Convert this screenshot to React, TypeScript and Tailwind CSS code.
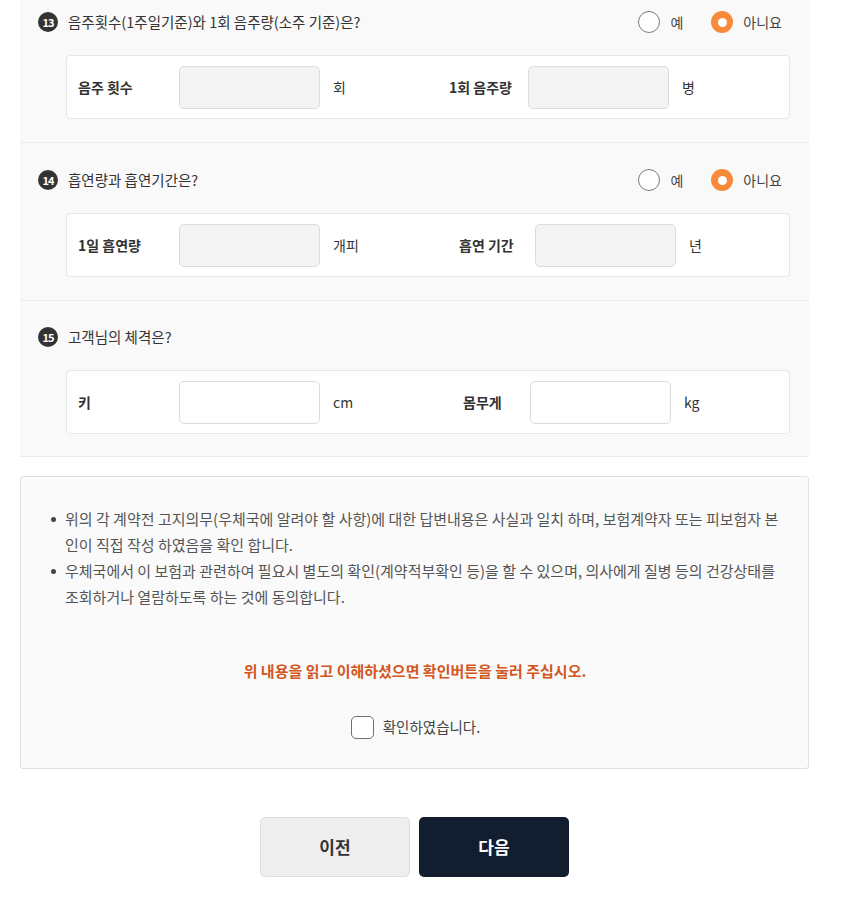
import { useState } from "react";

interface Field {
  label: string;
  unit: string;
  labelW: string;
  unitW: string;
  filled: boolean;
}

interface Question {
  no: number;
  title: string;
  radio: boolean;
  wrap: string;
  left: Field;
  right: Field;
}

const questions: Question[] = [
  {
    no: 13,
    title: "음주횟수(1주일기준)와 1회 음주량(소주 기준)은?",
    radio: true,
    wrap: "pt-[11px] pb-[23px]",
    left: { label: "음주 횟수", unit: "회", labelW: "w-[101px]", unitW: "w-[116px]", filled: true },
    right: { label: "1회 음주량", unit: "병", labelW: "w-[79px]", unitW: "", filled: true },
  },
  {
    no: 14,
    title: "흡연량과 흡연기간은?",
    radio: true,
    wrap: "pt-[26px] pb-[23px]",
    left: { label: "1일 흡연량", unit: "개피", labelW: "w-[101px]", unitW: "w-[126px]", filled: true },
    right: { label: "흡연 기간", unit: "년", labelW: "w-[76px]", unitW: "", filled: true },
  },
  {
    no: 15,
    title: "고객님의 체격은?",
    radio: false,
    wrap: "pt-[25px] pb-[22px]",
    left: { label: "키", unit: "cm", labelW: "w-[101px]", unitW: "w-[130px]", filled: false },
    right: { label: "몸무게", unit: "kg", labelW: "w-[67px]", unitW: "", filled: false },
  },
];

function Radio({ checked, label }: { checked: boolean; label: string }) {
  return (
    <label className="flex items-center gap-[10px] cursor-pointer">
      {checked ? (
        <span className="w-[22px] h-[22px] rounded-full bg-[#f7893a] flex items-center justify-center">
          <span className="w-[9px] h-[9px] rounded-full bg-white" />
        </span>
      ) : (
        <span className="w-[22px] h-[22px] rounded-full border-[1.5px] border-[#7a7a7a] bg-white" />
      )}
      <span className="text-[14px] text-[#444]">{label}</span>
    </label>
  );
}

function Input({ filled }: { filled: boolean }) {
  return (
    <input
      type="text"
      className={`w-[141px] h-[43px] rounded-[5px] border border-[#dcdcdc] outline-none px-3 ${
        filled ? "bg-[#f4f4f4]" : "bg-white"
      }`}
    />
  );
}

function QuestionBlock({ q, last }: { q: Question; last: boolean }) {
  const [yes, setYes] = useState(false);
  return (
    <div className={`${q.wrap} ${last ? "" : "border-b border-[#ececec]"}`}>
      <div className="flex items-center h-[22px] pl-[18px] pr-[27px]">
        <span className="w-[20px] h-[20px] rounded-full bg-[#333] text-white text-[11px] font-bold tracking-[-1px] flex items-center justify-center">
          {q.no}
        </span>
        <span className="ml-[10px] text-[14.5px] text-[#333]">{q.title}</span>
        {q.radio && (
          <div className="ml-auto flex items-center gap-[28px]" onClick={() => setYes(!yes)}>
            <Radio checked={yes} label="예" />
            <Radio checked={!yes} label="아니요" />
          </div>
        )}
      </div>
      <div className="ml-[46px] mr-[19px] mt-[22px] h-[64px] bg-white border border-[#e6e6e6] rounded-[4px] flex items-center pl-[11px]">
        <span className={`${q.left.labelW} text-[14px] font-bold text-[#333]`}>{q.left.label}</span>
        <Input filled={q.left.filled} />
        <span className={`ml-[13px] ${q.left.unitW} text-[14px] text-[#333]`}>{q.left.unit}</span>
        <span className={`${q.right.labelW} text-[14px] font-bold text-[#333]`}>{q.right.label}</span>
        <Input filled={q.right.filled} />
        <span className="ml-[13px] text-[14px] text-[#333]">{q.right.unit}</span>
      </div>
    </div>
  );
}

const notices = [
  "위의 각 계약전 고지의무(우체국에 알려야 할 사항)에 대한 답변내용은 사실과 일치 하며, 보험계약자 또는 피보험자 본인이 직접 작성 하였음을 확인 합니다.",
  "우체국에서 이 보험과 관련하여 필요시 별도의 확인(계약적부확인 등)을 할 수 있으며, 의사에게 질병 등의 건강상태를 조회하거나 열람하도록 하는 것에 동의합니다.",
];

export default function App() {
  const [agree, setAgree] = useState(false);

  return (
    <div
      className="min-h-[913px] bg-white pl-[20px] pr-[42px]"
      style={{ fontFamily: '"Noto Sans CJK KR", "Noto Sans", sans-serif' }}
    >
      <div className="bg-[#f9f9f9] border-b border-[#ececec]">
        {questions.map((q, i) => (
          <QuestionBlock key={q.no} q={q} last={i === questions.length - 1} />
        ))}
      </div>

      <div className="mt-[19px] h-[293px] bg-[#fafafa] border border-[#e0e0e0] rounded-[3px] pt-[29px] pl-[30px] pr-[28px]">
        <ul className="text-[15px] leading-[26px] text-[#555]">
          {notices.map((n) => (
            <li key={n} className="flex">
              <span className="w-[14px] shrink-0 pt-[11px]">
                <span className="block w-[5px] h-[5px] rounded-full bg-[#444]" />
              </span>
              <span>{n}</span>
            </li>
          ))}
        </ul>
        <p className="mt-[50px] text-center text-[15px] font-bold text-[#d4561c] pr-[1px]">
          위 내용을 읽고 이해하셨으면 확인버튼을 눌러 주십시오.
        </p>
        <label className="mt-[33px] flex items-center justify-center gap-[9px] cursor-pointer">
          <span
            onClick={() => setAgree(!agree)}
            className={`w-[23px] h-[23px] rounded-[5px] border-[1.5px] border-[#6f6f6f] flex items-center justify-center ${
              agree ? "bg-[#f7893a] border-[#f7893a]" : "bg-white"
            }`}
          />
          <span className="text-[14.5px] text-[#444]">확인하였습니다.</span>
        </label>
      </div>

      <div className="mt-[48px] flex justify-center gap-[9px]">
        <button className="w-[150px] h-[60px] rounded-[5px] bg-[#eeeeee] border border-[#dddddd] text-[17px] font-bold text-[#333]">
          이전
        </button>
        <button className="w-[150px] h-[60px] rounded-[5px] bg-[#131d30] text-[17px] font-bold text-white">
          다음
        </button>
      </div>
    </div>
  );
}
